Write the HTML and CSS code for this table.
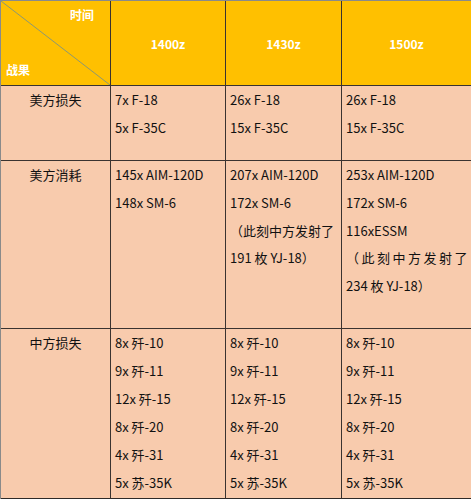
FILE: index.html
```html
<!DOCTYPE html>
<html lang="zh">
<head>
<meta charset="utf-8">
<link rel="stylesheet" href="styles.css">
</head>
<body>
<div class="sheet">
  <div class="cell head corner">
    <svg class="diag" viewBox="0 0 110 85" preserveAspectRatio="none"><line x1="0" y1="0" x2="110" y2="85" stroke="#8a9774" stroke-width="1"/></svg>
    <span class="c-top">时间</span>
    <span class="c-bottom">战果</span>
  </div>
  <div class="cell head center">1400z</div>
  <div class="cell head center">1430z</div>
  <div class="cell head center last">1500z</div>

  <div class="cell body label">美方损失</div>
  <div class="cell body"><p>7x F-18</p><p>5x F-35C</p></div>
  <div class="cell body"><p>26x F-18</p><p>15x F-35C</p></div>
  <div class="cell body last"><p>26x F-18</p><p>15x F-35C</p></div>

  <div class="cell body label">美方消耗</div>
  <div class="cell body"><p>145x AIM-120D</p><p>148x SM-6</p></div>
  <div class="cell body"><p>207x AIM-120D</p><p>172x SM-6</p><p>（此刻中方发射了</p><p>191 枚 YJ-18）</p></div>
  <div class="cell body last"><p>253x AIM-120D</p><p>172x SM-6</p><p>116xESSM</p><p class="spread">（此刻中方发射了</p><p>234 枚 YJ-18）</p></div>

  <div class="cell body label bottom">中方损失</div>
  <div class="cell body bottom tall"><p>8x 歼-10</p><p>9x 歼-11</p><p>12x 歼-15</p><p>8x 歼-20</p><p>4x 歼-31</p><p>5x 苏-35K</p></div>
  <div class="cell body bottom tall"><p>8x 歼-10</p><p>9x 歼-11</p><p>12x 歼-15</p><p>8x 歼-20</p><p>4x 歼-31</p><p>5x 苏-35K</p></div>
  <div class="cell body bottom tall last"><p>8x 歼-10</p><p>9x 歼-11</p><p>12x 歼-15</p><p>8x 歼-20</p><p>4x 歼-31</p><p>5x 苏-35K</p></div>
</div>
</body>
</html>
```

FILE: styles.css
```css
html, body {
  margin: 0;
  padding: 0;
  background: #ffffff;
}

body {
  font-family: "Noto Sans CJK SC", "Noto Sans", sans-serif;
  font-size: 13px;
  color: #111111;
}

.sheet {
  display: grid;
  grid-template-columns: 110px 115px 116px 130px;
  grid-template-rows: 85px 75px 168px 170px;
  width: 471px;
  border-top: 1px solid #8a8a8a;
  border-left: 1px solid #8a8a8a;
  box-sizing: border-box;
}

.cell {
  border-right: 1px solid #3a3330;
  border-bottom: 1px solid #3a3330;
  box-sizing: border-box;
  min-width: 0;
}

.cell.last {
  border-right-color: #8a8a8a;
}

.head {
  background: #ffc000;
  color: #ffffff;
  font-weight: bold;
  font-size: 12px;
}

.center {
  display: flex;
  align-items: center;
  justify-content: center;
}

.corner {
  position: relative;
  display: flex;
  flex-direction: column;
  justify-content: space-between;
  padding: 5px 16px 7px 5px;
}

.diag {
  position: absolute;
  left: 0;
  top: 0;
  width: 100%;
  height: 100%;
}

.c-top {
  align-self: flex-end;
  position: relative;
}

.c-bottom {
  align-self: flex-start;
  position: relative;
}

.body {
  background: #f8cbad;
  padding: 0 4px;
}

.bottom {
  border-bottom-color: #2e2a28;
}

.label {
  text-align: center;
  line-height: 28px;
}

.body p {
  margin: 0;
  line-height: 27.8px;
  white-space: nowrap;
}

.tall p {
  line-height: 28px;
}

.spread {
  letter-spacing: 2.5px;
}
```
